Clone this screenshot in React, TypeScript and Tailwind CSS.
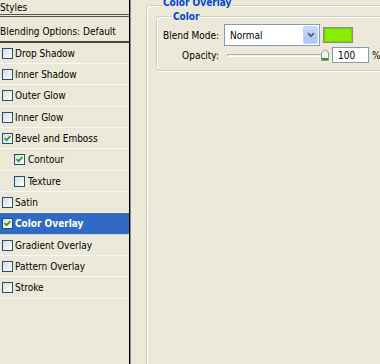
import React from "react";

type Row = { label: string; checked?: boolean; indent?: boolean; selected?: boolean; tall?: boolean };

const rows: Row[] = [
  { label: "Drop Shadow" },
  { label: "Inner Shadow" },
  { label: "Outer Glow", tall: true },
  { label: "Inner Glow" },
  { label: "Bevel and Emboss", checked: true },
  { label: "Contour", checked: true, indent: true, tall: true },
  { label: "Texture", indent: true },
  { label: "Satin" },
  { label: "Color Overlay", checked: true, selected: true, tall: true },
  { label: "Gradient Overlay" },
  { label: "Pattern Overlay" },
  { label: "Stroke", tall: true },
];

function CheckBox({ checked }: { checked?: boolean }) {
  return (
    <span className="w-[11px] h-[11px] border border-[#1c5180] bg-linear-to-br from-[#dcdcd7] to-white flex items-center justify-center shrink-0">
      {checked && (
        <svg width="7" height="7" viewBox="0 0 7 7">
          <path d="M0.6 3.2 L2.6 5.2 L6.4 1.2" stroke="#21a121" strokeWidth="1.7" fill="none" />
        </svg>
      )}
    </span>
  );
}

export default function App() {
  return (
    <div className="w-[380px] h-[364px] bg-[#ece9d8] flex overflow-hidden font-['DejaVu_Sans_Condensed','DejaVu_Sans',sans-serif] text-[10px] text-black leading-[13px]">
      {/* Left styles list */}
      <div className="w-[130px] shrink-0 border-r border-black flex flex-col">
        <div className="h-[17px] border-b-[3px] border-double border-[#555] flex items-start pt-[1px]">
          <span>Styles</span>
        </div>
        <div className="h-[26px] border-b-2 border-[#444] pt-[8px]">
          <span>Blending Options: Default</span>
        </div>
        {rows.map((r) => (
          <div
            key={r.label}
            className={`${r.tall ? "h-[22px]" : "h-[21px]"} border-b border-white/70 flex items-center gap-[2px] ${
              r.indent ? "pl-[14px]" : "pl-[2px]"
            } ${r.selected ? "bg-[#316ac5] text-white font-bold" : ""}`}
          >
            <CheckBox checked={r.checked} />
            <span className={r.indent ? "ml-px" : ""}>{r.label}</span>
          </div>
        ))}
      </div>
      <div className="w-px shrink-0 bg-[#8a8a8a]" />

      {/* Right content */}
      <div className="flex-1 pl-[15px] pt-[5px] overflow-hidden">
        <div className="relative w-[300px] h-[400px] border-t border-l border-[#d0d0bf] rounded-tl-[3px] shadow-[inset_1px_1px_0_#fff]">
          <span className="absolute left-[15px] top-[-10px] px-px bg-[#ece9d8] font-bold text-[#0046d5]">Color Overlay</span>

          <div className="relative ml-[9px] mt-[10px] w-[260px] h-[55px] border border-[#d0d0bf] rounded-[3px] shadow-[inset_1px_1px_0_#fff,1px_1px_0_#fff]">
            <span className="absolute left-[15px] top-[-7px] px-px bg-[#ece9d8] font-bold text-[#0046d5]">Color</span>

            <div className="pt-[7px] grid grid-cols-[62px_auto] gap-x-[5px] gap-y-px items-center">
              <span className="text-right">Blend Mode:</span>
              <div className="flex items-center">
                <div className="w-[96px] h-[22px] border border-[#7f9db9] bg-white flex p-px">
                  <span className="flex-1 flex items-center pl-[4px]">Normal</span>
                  <span className="w-[15px] h-full rounded-[2px] border border-[#c3d3fd] bg-linear-to-b from-[#c9d8fc] to-[#b1c5f4] flex items-center justify-center">
                    <svg width="8" height="6" viewBox="0 0 8 6">
                      <path d="M1 1.2 L4 4.2 L7 1.2" stroke="#4d6185" strokeWidth="1.8" fill="none" />
                    </svg>
                  </span>
                </div>
                <div className="ml-[3px] w-[30px] h-[16px] border border-[#8c8c80] bg-[#88ee00] shadow-[inset_0_0_0_1px_#7acc10]" />
              </div>

              <span className="text-right">Opacity:</span>
              <div className="flex items-center h-[16px]">
                <div className="w-[105px] flex items-center pl-[3px]">
                  <div className="flex-1 h-[3px] border border-[#b0ad9f] border-b-white bg-[#f1f0ea] rounded-[1px]" />
                  <svg width="8" height="12" viewBox="0 0 8 12" className="shrink-0 -ml-px">
                    <path d="M0.5 4 L4 0.5 L7.5 4 L7.5 11.5 L0.5 11.5 Z" fill="#f7f7f4" stroke="#8e9a8a" />
                    <rect x="1" y="9" width="6" height="2" fill="#21a121" />
                  </svg>
                </div>
                <div className="ml-[3px] w-[37px] h-[16px] border border-[#7f9db9] bg-white flex items-center pl-[5px]">100</div>
                <span className="ml-[3px]">%</span>
              </div>
            </div>
          </div>
        </div>
      </div>
    </div>
  );
}
